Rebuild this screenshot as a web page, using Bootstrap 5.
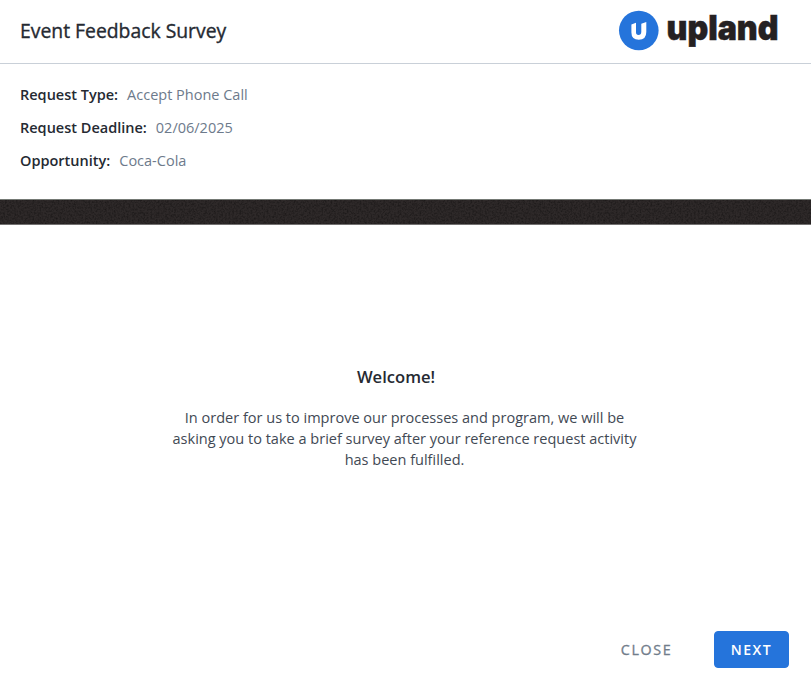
<!DOCTYPE html>
<html lang="en">
<head>
<meta charset="utf-8">
<meta name="viewport" content="width=device-width, initial-scale=1">
<title>Event Feedback Survey</title>
<link href="https://cdn.jsdelivr.net/npm/bootstrap@5.3.0/dist/css/bootstrap.min.css" rel="stylesheet">
<style>
body{font-family:"Open Sans","Noto Sans",sans-serif;font-size:14.5px;color:#252a32;height:690px;overflow:hidden}
.survey-header{height:64px;border-bottom:1px solid #c9d0d8;padding:0 28px 2px 20px}
.survey-title{font-size:19.35px;font-weight:400;line-height:26px;-webkit-text-stroke:.35px currentColor}
.details{height:135px;padding:20px 20px 0;line-height:22px}
.details dt{font-weight:600;margin-right:9px}
.details dd{color:#6d7a8b}
.details .detail-row{margin-bottom:11px}
.band{height:26px;border-top:1px solid #747974;border-bottom:1px solid #737171;background:#2e2929}
.intro{padding:140px 2px 0 0}
.welcome{font-size:16.6px;font-weight:600;line-height:24px;margin:0 17px 18px 0}
.intro-text{color:#424954;line-height:21px;width:470px;font-size:14.53px}
.actions{padding:0 22px 22px 0}
.survey-btn{--bs-btn-font-size:14px;--bs-btn-font-weight:600;--bs-btn-border-radius:4px;height:37px;line-height:21px;letter-spacing:1.5px;padding:7px 15.8px}
.btn-close-survey{--bs-btn-color:#717d8b;--bs-btn-font-weight:400;-webkit-text-stroke:.3px currentColor;margin-right:25px;font-size:14.3px;letter-spacing:1.6px}
.btn-next{--bs-btn-bg:#2574db;--bs-btn-border-color:#2574db;--bs-btn-color:#fff}
.brand-word{font:900 34px Inter,"Open Sans",sans-serif;fill:#252122}
</style>
<script defer src="https://cdn.jsdelivr.net/npm/bootstrap@5.3.0/dist/js/bootstrap.bundle.min.js"></script>
</head>
<body class="d-flex flex-column bg-white">
<header class="survey-header d-flex align-items-center justify-content-between flex-shrink-0">
  <h1 class="survey-title mb-0">Event Feedback Survey</h1>
  <svg width="164" height="60" viewBox="619 1 164 60" overflow="visible" role="img" aria-label="upland">
    <circle cx="638.8" cy="30.5" r="19.8" fill="#2574db"/>
    <path d="M631.4 24.4 L636 22.8 V32.3 Q636 35 638.4 35 Q641.3 35 641.3 31.8 V23.7 L646.3 22 V32 Q646.3 39.8 638.8 39.8 Q631.4 39.8 631.4 32.6Z" fill="#fff"/>
    <text class="brand-word" x="666.5" y="40.3" textLength="112" lengthAdjust="spacingAndGlyphs" stroke="#252122" stroke-width=".5">upland</text>
  </svg>
</header>
<dl class="details mb-0 flex-shrink-0">
  <div class="detail-row d-flex"><dt>Request Type:</dt><dd class="mb-0">Accept Phone Call</dd></div>
  <div class="detail-row d-flex"><dt>Request Deadline:</dt><dd class="mb-0">02/06/2025</dd></div>
  <div class="detail-row d-flex"><dt>Opportunity:</dt><dd class="mb-0">Coca-Cola</dd></div>
</dl>
<svg class="band w-100 d-block flex-shrink-0" aria-hidden="true">
  <filter id="grain" color-interpolation-filters="sRGB"><feTurbulence type="fractalNoise" baseFrequency=".55" numOctaves="2" seed="4"/><feColorMatrix values="0 0 0 0 0  0 0 0 0 0  0 0 0 0 0  .8 0 0 0 -.3"/></filter>
  <rect width="100%" height="100%" filter="url(#grain)"/>
</svg>
<main class="intro flex-grow-1 text-center">
  <h2 class="welcome">Welcome!</h2>
  <p class="intro-text mx-auto mb-0">In order for us to improve our processes and program, we will be<br>asking you to take a brief survey after your reference request activity<br>has been fulfilled.</p>
</main>
<footer class="actions d-flex justify-content-end">
  <button type="button" class="btn survey-btn btn-close-survey">CLOSE</button>
  <button type="button" class="btn survey-btn btn-next">NEXT</button>
</footer>
</body>
</html>
